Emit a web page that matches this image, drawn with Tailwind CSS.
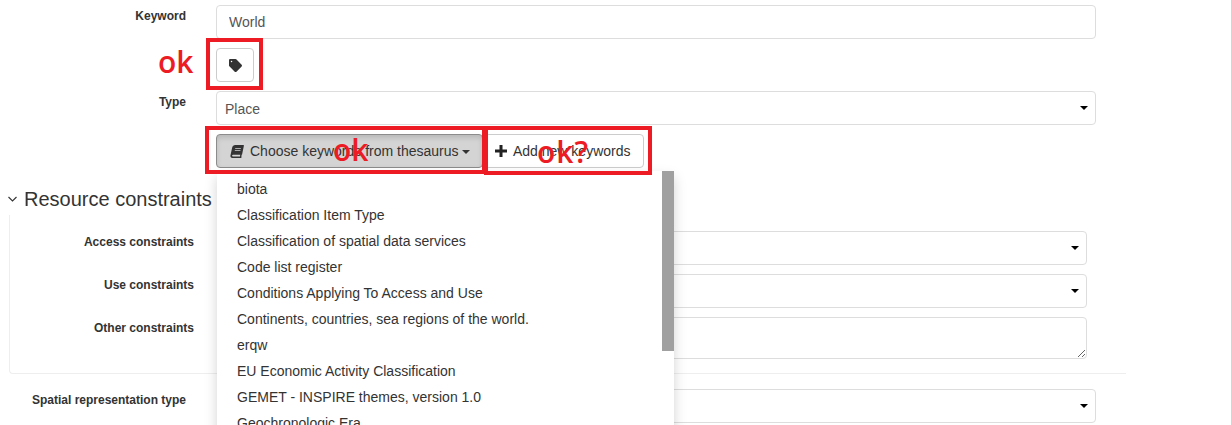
<!DOCTYPE html>
<html lang="en">
<head>
  <meta charset="UTF-8" />
  <meta name="viewport" content="width=device-width, initial-scale=1" />
  <title>Metadata editor</title>
  <script src="https://cdn.jsdelivr.net/npm/@tailwindcss/browser@4"></script>
</head>
<body class="bg-white text-[#333] font-['Liberation_Sans',Arial,sans-serif] text-[14px] overflow-hidden">
  <main class="relative w-[1231px] h-[425px] overflow-hidden pt-[5px]">
    <!-- keyword -->
    <div class="flex">
      <label class="w-[186px] text-right text-[12px] font-bold leading-[20px] pt-[1px] shrink-0">Keyword</label>
      <div class="ml-[30px] w-[880px]">
        <input value="World" class="block w-full h-[34px] px-[12px] border border-[#ddd] rounded-[4px] text-[#555] text-[14px]" />
        <button class="mt-[9px] flex items-center justify-center w-[38px] h-[34px] border border-[#ccc] rounded-[4px] bg-white">
          <svg class="w-[13px] h-[13px] fill-[#333]" viewBox="0 0 512 512"><path d="M0 252.118V48C0 21.49 21.49 0 48 0h204.118a48 48 0 0 1 33.941 14.059l211.882 211.882c18.745 18.745 18.745 49.137 0 67.882L293.823 497.941c-18.745 18.745-49.137 18.745-67.882 0L14.059 286.059A48 48 0 0 1 0 252.118zM100 70c-16.500 0-30 13.500-30 30s13.500 30 30 30 30-13.500 30-30-13.500-30-30-30z"/></svg>
        </button>
      </div>
    </div>

    <!-- type -->
    <div class="flex mt-[9px]">
      <label class="w-[186px] text-right text-[12px] font-bold leading-[20px] pt-[1px] shrink-0">Type</label>
      <div class="ml-[30px] w-[880px]">
        <div class="relative">
          <select class="block w-full h-[34px] pl-[8px] pt-[3px] appearance-none border border-[#ddd] rounded-[4px] bg-white text-[#555] text-[14px]">
            <option>Place</option>
          </select>
          <span class="absolute right-[8px] top-[15px] border-x-[4px] border-x-transparent border-t-[4px] border-t-black"></span>
        </div>
        <div class="flex mt-[9px]">
          <button class="flex items-center h-[34px] w-[267px] pl-[13px] border border-[#8c8c8c] rounded-[4px] bg-[#d4d4d4] shadow-[inset_0_3px_5px_rgba(0,0,0,0.125)] text-[14px] text-[#333]">
            <svg class="w-[14px] h-[13px] fill-[#333] -skew-x-12" viewBox="0 0 448 512"><path d="M448 360V24c0-13.3-10.7-24-24-24H96C43 0 0 43 0 96v320c0 53 43 96 96 96h328c13.3 0 24-10.7 24-24v-16c0-7.5-3.5-14.3-8.9-18.7-4.2-15.4-4.2-59.3 0-74.7 5.4-4.3 8.9-11.1 8.9-18.6zM128 134c0-3.3 2.7-6 6-6h212c3.3 0 6 2.7 6 6v20c0 3.3-2.7 6-6 6H134c-3.3 0-6-2.7-6-6v-20zm0 64c0-3.3 2.7-6 6-6h212c3.3 0 6 2.7 6 6v20c0 3.3-2.7 6-6 6H134c-3.3 0-6-2.7-6-6v-20zm253.4 250H96c-17.7 0-32-14.3-32-32 0-17.6 14.4-32 32-32h285.4c-1.9 17.1-1.9 46.9 0 64z"/></svg>
            <span class="ml-[6px]">Choose keywords from thesaurus</span>
            <span class="ml-[3px] mt-[2px] border-x-[4px] border-x-transparent border-t-[4px] border-t-[#333]"></span>
          </button>
          <button class="flex items-center h-[34px] w-[160px] ml-[1px] pl-[10px] border border-[#ccc] rounded-[4px] bg-white text-[14px] text-[#333]">
            <svg class="w-[12px] h-[12px] fill-[#222]" viewBox="0 0 12 12"><path d="M4.500 0h3v4.500H12v3H7.500V12h-3V7.500H0v-3h4.500z"/></svg>
            <span class="ml-[6px]">Add new keywords</span>
          </button>
        </div>
      </div>
    </div>

    <!-- resource constraints -->
    <h3 class="flex items-center mt-[18px] h-[26px] pl-[8px] text-[20px] leading-[26px] text-[#333]">
      <svg class="w-[9px] h-[6px] stroke-[#333] fill-none" viewBox="0 0 9 6"><path d="M0.500 1l4 4 4-4" stroke-width="1.100"/></svg>
      <span class="ml-[7px]">Resource constraints</span>
    </h3>
    <section class="ml-[9px] w-[1117px] h-[159px] mt-[3px] pt-[16px] border-l border-b border-[#eee] rounded-bl-[4px]">
      <div class="flex">
        <label class="w-[184px] text-right text-[12px] font-bold leading-[20px] pt-[1px] shrink-0">Access constraints</label>
        <div class="relative ml-[24px] w-[869px]">
          <select class="block w-full h-[34px] appearance-none border border-[#ddd] rounded-[4px] bg-white"></select>
          <span class="absolute right-[8px] top-[15px] border-x-[4px] border-x-transparent border-t-[4px] border-t-black"></span>
        </div>
      </div>
      <div class="flex mt-[9px]">
        <label class="w-[184px] text-right text-[12px] font-bold leading-[20px] pt-[1px] shrink-0">Use constraints</label>
        <div class="relative ml-[24px] w-[869px]">
          <select class="block w-full h-[34px] appearance-none border border-[#ddd] rounded-[4px] bg-white"></select>
          <span class="absolute right-[8px] top-[15px] border-x-[4px] border-x-transparent border-t-[4px] border-t-black"></span>
        </div>
      </div>
      <div class="flex mt-[9px]">
        <label class="w-[184px] text-right text-[12px] font-bold leading-[20px] pt-[1px] shrink-0">Other constraints</label>
        <textarea class="block ml-[24px] w-[869px] h-[42px] border border-[#ddd] rounded-[4px] bg-white"></textarea>
      </div>
    </section>

    <!-- spatial representation -->
    <div class="flex mt-[15px]">
      <label class="w-[186px] text-right text-[12px] font-bold leading-[20px] pt-[1px] shrink-0">Spatial representation type</label>
      <div class="relative ml-[32px] w-[878px]">
        <select class="block w-full h-[34px] appearance-none border border-[#ddd] rounded-[4px] bg-white"></select>
        <span class="absolute right-[8px] top-[15px] border-x-[4px] border-x-transparent border-t-[4px] border-t-black"></span>
      </div>
    </div>

    <!-- open thesaurus menu -->
    <div class="absolute left-[217px] top-[171px] w-[457px] h-[270px] bg-white shadow-[0_6px_12px_rgba(0,0,0,0.175)]">
      <ul class="pt-[5px] pl-[20px] text-[14px] leading-[26px] text-[#333]">
        <li>biota</li>
        <li>Classification Item Type</li>
        <li>Classification of spatial data services</li>
        <li>Code list register</li>
        <li>Conditions Applying To Access and Use</li>
        <li>Continents, countries, sea regions of the world.</li>
        <li>erqw</li>
        <li>EU Economic Activity Classification</li>
        <li>GEMET - INSPIRE themes, version 1.0</li>
        <li>Geochronologic Era</li>
      </ul>
      <div class="absolute right-0 top-0 w-[12px] h-[180px] bg-[#a0a0a0]"></div>
    </div>

    <!-- red annotations -->
    <div class="absolute left-[206px] top-[38px] w-[57px] h-[52px] border-[4px] border-[#ed1c24]"></div>
    <div class="absolute left-[205px] top-[126px] w-[281px] h-[48px] border-[4px] border-[#ed1c24]"></div>
    <div class="absolute left-[484px] top-[126px] w-[168px] h-[49px] border-[4px] border-[#ed1c24]"></div>
    <span class="absolute left-[158px] top-[41px] font-['Open_Sans',sans-serif] font-semibold text-[30px] leading-[42px] text-[#ed1c24]">ok</span>
    <span class="absolute left-[333px] top-[129px] font-['Open_Sans',sans-serif] font-semibold text-[30px] leading-[42px] text-[#ed1c24]">ok</span>
    <span class="absolute left-[537px] top-[131px] font-['Open_Sans',sans-serif] font-semibold text-[30px] leading-[42px] tracking-[1px] text-[#ed1c24]">ok?</span>
  </main>
</body>
</html>
